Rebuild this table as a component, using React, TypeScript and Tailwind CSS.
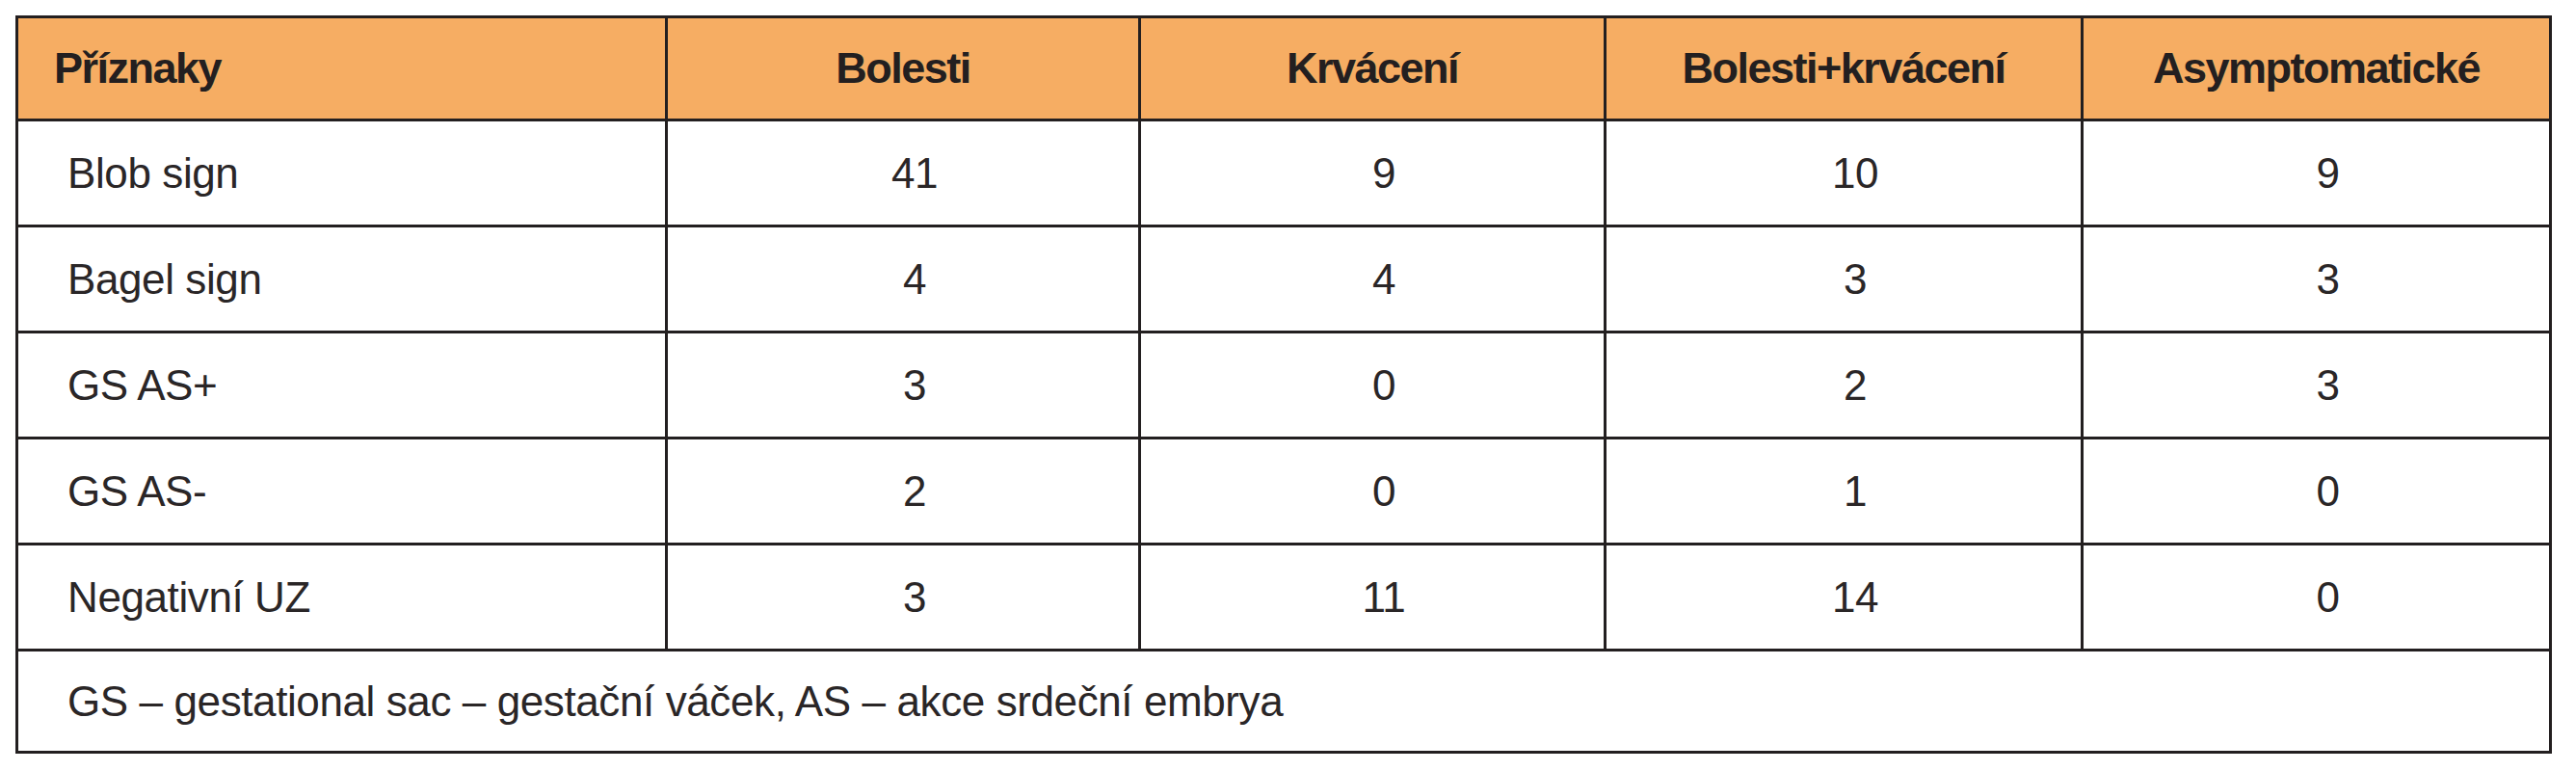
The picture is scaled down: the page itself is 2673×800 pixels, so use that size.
const rows = [
  { label: "Blob sign", values: ["41", "9", "10", "9"] },
  { label: "Bagel sign", values: ["4", "4", "3", "3"] },
  { label: "GS AS+", values: ["3", "0", "2", "3"] },
  { label: "GS AS-", values: ["2", "0", "1", "0"] },
  { label: "Negativní UZ", values: ["3", "11", "14", "0"] },
];

const columns = ["Bolesti", "Krvácení", "Bolesti+krvácení", "Asymptomatické"];

export default function App() {
  return (
    <div className="min-h-[800px] bg-white pl-4 pt-4 text-[#231f20]">
      <table className="w-[2632px] table-fixed border-collapse border-[3px] border-[#231f20] font-['Liberation_Sans',Arial,sans-serif]">
        <colgroup>
          <col className="w-[674px]" />
          <col className="w-[491px]" />
          <col className="w-[483px]" />
          <col className="w-[495px]" />
          <col />
        </colgroup>
        <thead>
          <tr className="h-[107px] bg-[#f6ad63] text-[45px] font-bold tracking-[-1.5px]">
            <th className="border-[3px] border-[#231f20] pl-[37px] text-left">Příznaky</th>
            {columns.map((c) => (
              <th key={c} className="border-[3px] border-[#231f20] text-center">
                {c}
              </th>
            ))}
          </tr>
        </thead>
        <tbody className="text-[44px] tracking-[-0.4px] text-[#2a2627]">
          {rows.map((r) => (
            <tr key={r.label} className="h-[110px]">
              <td className="border-[3px] border-[#231f20] pl-[51px]">{r.label}</td>
              {r.values.map((v, i) => (
                <td key={i} className="border-[3px] border-[#231f20] pl-6 text-center">
                  {v}
                </td>
              ))}
            </tr>
          ))}
          <tr className="h-[106px]">
            <td colSpan={5} className="border-[3px] border-[#231f20] pl-[51px]">
              GS – gestational sac – gestační váček, AS – akce srdeční embrya
            </td>
          </tr>
        </tbody>
      </table>
    </div>
  );
}
